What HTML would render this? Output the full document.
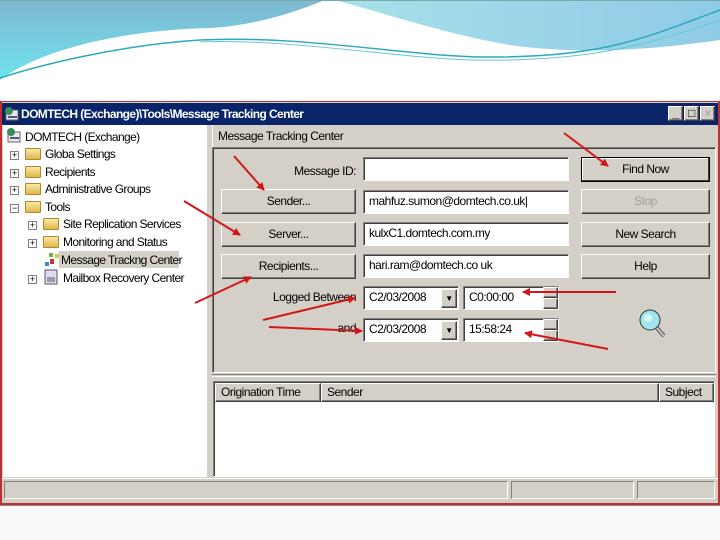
<!DOCTYPE html>
<html><head><meta charset="utf-8"><style>
*{box-sizing:border-box;margin:0;padding:0}
body{width:720px;height:540px;overflow:hidden;background:#fff;font-family:"Liberation Sans",sans-serif;font-size:12px;color:#000;position:relative;letter-spacing:-0.5px}
.a{position:absolute}
.btn{position:absolute;background:#d4d0c8;border:1px solid;border-color:#fff #404040 #404040 #fff;box-shadow:inset -1px -1px 0 #808080;text-align:center;line-height:22px;font-size:12px}
.inp{position:absolute;background:#fff;border:1px solid;border-color:#808080 #fff #fff #808080;box-shadow:inset 1px 1px 0 #404040;line-height:21px;padding-left:5px;font-size:12px;white-space:nowrap}
.lbl{position:absolute;font-size:12px;white-space:nowrap}
.tree{position:absolute;font-size:12px;white-space:nowrap;line-height:16px;letter-spacing:-0.6px}
.fold{display:inline-block;width:16px;height:12px;background:linear-gradient(#f7e9a8,#e0b84a);border:1px solid #b08a2a;border-radius:1px;vertical-align:-2px;margin-right:4px}
.pm{display:inline-block;width:9px;height:9px;border:1px solid #808080;background:#fff;font-size:9px;line-height:7px;text-align:center;vertical-align:0px;margin-right:6px;color:#000;letter-spacing:0}
</style></head><body>
<svg class="a" style="left:0;top:0" width="720" height="100">
<defs><linearGradient id="g1" x1="0" y1="0" x2="0" y2="1"><stop offset="0" stop-color="#7fb7cf"/><stop offset="1" stop-color="#6fe3ee"/></linearGradient>
<linearGradient id="g2" x1="0" y1="0" x2="1" y2="0"><stop offset="0" stop-color="#a9e0ea"/><stop offset="1" stop-color="#8fcbe6"/></linearGradient></defs>
<path d="M0 0 H325 C300 10 260 25 210 28 C120 30 40 50 0 80 Z" fill="url(#g1)"/>
<path d="M335 0 H720 V40 C650 50 580 55 510 45 C450 35 390 15 335 0Z" fill="url(#g2)"/>
<path d="M720 10 C640 40 600 58 480 57 C400 55 300 35 200 40 C120 45 40 65 0 78" stroke="#2aa9c0" stroke-width="1.5" fill="none"/>
<path d="M720 20 C640 48 580 62 470 60 C400 58 280 38 200 42" stroke="#68c7d6" stroke-width="1" fill="none"/>
<rect x="0" y="0" width="720" height="1" fill="#7aa"/>
</svg>
<div class="a" style="left:0;top:101px;width:720px;height:404px;background:#d4d0c8;border:2px solid #c03030;border-top:1px solid #c03030"></div>
<div class="a" style="left:2px;top:103px;width:716px;height:22px;background:#0a246a"></div>
<svg class="a" style="left:4px;top:106px" width="16" height="16"><rect x="2" y="4" width="12" height="10" fill="#e8e8f0" stroke="#666"/><circle cx="5" cy="5" r="4" fill="#3a8a5a"/><rect x="4" y="10" width="9" height="2" fill="#557"/></svg>
<div class="lbl" style="left:21px;top:107px;color:#fff;font-weight:bold;font-size:12px;letter-spacing:-0.6px">DOMTECH (Exchange)\Tools\Message Tracking Center</div>
<div class="btn" style="left:668px;top:106px;width:15px;height:15px;line-height:12px;font-weight:bold">_</div>
<div class="btn" style="left:684px;top:106px;width:15px;height:15px;line-height:13px">&#9633;</div>
<div class="btn" style="left:700px;top:106px;width:15px;height:15px;line-height:13px;color:#999">×</div>
<div class="a" style="left:3px;top:125px;width:206px;height:352px;background:#fff;border-right:2px solid #d4d0c8"></div>
<svg class="a" style="left:6px;top:127px" width="16" height="16"><rect x="2" y="5" width="12" height="10" fill="#e8e8f0" stroke="#666"/><circle cx="5" cy="5" r="4" fill="#3a8a5a"/><rect x="4" y="10" width="9" height="2" fill="#557"/></svg>
<div class="tree" style="left:25px;top:129px">DOMTECH (Exchange)</div>
<div class="tree" style="left:10px;top:146px"><span class="pm">+</span><span class="fold"></span>Globa Settings</div>
<div class="tree" style="left:10px;top:164px"><span class="pm">+</span><span class="fold"></span>Recipients</div>
<div class="tree" style="left:10px;top:181px"><span class="pm">+</span><span class="fold"></span>Administrative Groups</div>
<div class="tree" style="left:10px;top:199px"><span class="pm">−</span><span class="fold"></span>Tools</div>
<div class="tree" style="left:28px;top:216px"><span class="pm">+</span><span class="fold"></span>Site Replication Services</div>
<div class="tree" style="left:28px;top:234px"><span class="pm">+</span><span class="fold"></span>Monitoring and Status</div>
<div class="a" style="left:44px;top:252px;width:16px;height:16px"><svg width="16" height="16"><rect x="1" y="10" width="4" height="4" fill="#48c"/><rect x="5" y="1" width="4" height="4" fill="#6b4"/><rect x="11" y="2" width="4" height="4" fill="#dc4"/><rect x="6" y="7" width="4" height="5" fill="#c33"/></svg></div>
<div class="a" style="left:59px;top:251px;width:120px;height:17px;background:#d4d0c8"></div>
<div class="tree" style="left:61px;top:252px">Message Trackng Center</div>
<div class="tree" style="left:28px;top:269px"><span class="pm">+</span><svg width="16" height="16" style="vertical-align:-3px;margin-right:4px"><rect x="2" y="1" width="12" height="14" fill="#dde" stroke="#557"/><rect x="4" y="8" width="8" height="5" fill="#99a"/></svg>Mailbox Recovery Center</div>
<div class="a" style="left:212px;top:125px;width:504px;height:22px;background:#d4d0c8;border-left:1px solid #fff"></div>
<div class="lbl" style="left:218px;top:129px">Message Tracking Center</div>
<div class="a" style="left:212px;top:147px;width:504px;height:226px;border:1px solid;border-color:#808080 #fff #fff #808080;box-shadow:inset 1px 1px 0 #404040"></div>
<div class="lbl" style="right:364px;top:164px">Message ID:</div>
<div class="inp" style="left:363px;top:157px;width:206px;height:24px"></div>
<div class="btn" style="left:221px;top:189px;width:135px;height:25px">Sender...</div>
<div class="inp" style="left:363px;top:190px;width:206px;height:24px">mahfuz.sumon@domtech.co.uk|</div>
<div class="btn" style="left:221px;top:222px;width:135px;height:25px">Server...</div>
<div class="inp" style="left:363px;top:222px;width:206px;height:24px">kulxC1.domtech.com.my</div>
<div class="btn" style="left:221px;top:254px;width:135px;height:25px">Recipients...</div>
<div class="inp" style="left:363px;top:254px;width:206px;height:24px">hari.ram@domtech.co uk</div>
<div class="btn" style="left:581px;top:157px;width:129px;height:25px;border:1px solid #000;box-shadow:inset -1px -1px 0 #404040,inset 1px 1px 0 #fff">Find Now</div>
<div class="btn" style="left:581px;top:189px;width:129px;height:25px;color:#a0a0a0">Stop</div>
<div class="btn" style="left:581px;top:222px;width:129px;height:25px">New Search</div>
<div class="btn" style="left:581px;top:254px;width:129px;height:25px">Help</div>
<div class="lbl" style="right:364px;top:290px">Logged Between</div>
<div class="lbl" style="right:364px;top:321px">and</div>
<div class="inp" style="left:363px;top:286px;width:96px;height:24px">C2/03/2008</div>
<div class="btn" style="left:441px;top:289px;width:16px;height:19px;line-height:17px;font-size:8px">▼</div>
<div class="inp" style="left:463px;top:286px;width:96px;height:24px">C0:00:00</div>
<div class="inp" style="left:363px;top:318px;width:96px;height:24px">C2/03/2008</div>
<div class="btn" style="left:441px;top:321px;width:16px;height:19px;line-height:17px;font-size:8px">▼</div>
<div class="inp" style="left:463px;top:318px;width:96px;height:24px">15:58:24</div>
<div class="btn" style="left:543px;top:287px;width:15px;height:11px"></div><div class="btn" style="left:543px;top:298px;width:15px;height:11px"></div>
<div class="btn" style="left:543px;top:319px;width:15px;height:11px"></div><div class="btn" style="left:543px;top:330px;width:15px;height:11px"></div>
<svg class="a" style="left:638px;top:308px" width="32" height="32"><line x1="18" y1="19" x2="26" y2="28" stroke="#555" stroke-width="4"/><line x1="18" y1="19" x2="26" y2="28" stroke="#ccc" stroke-width="2"/><circle cx="12" cy="12" r="10" fill="#9ee6ec" stroke="#333"/><circle cx="10" cy="10" r="4" fill="#d8f8fa"/></svg>
<div class="a" style="left:212px;top:374px;width:504px;height:3px;border-top:1px solid #808080;border-bottom:1px solid #fff"></div>
<div class="a" style="left:213px;top:381px;width:502px;height:96px;background:#fff;border:1px solid;border-color:#808080 #fff #fff #808080;box-shadow:inset 1px 1px 0 #404040"></div>
<div class="btn" style="left:215px;top:383px;width:106px;height:19px;line-height:17px;text-align:left;padding-left:5px">Origination Time</div>
<div class="btn" style="left:321px;top:383px;width:338px;height:19px;line-height:17px;text-align:left;padding-left:5px">Sender</div>
<div class="btn" style="left:659px;top:383px;width:55px;height:19px;line-height:17px;text-align:left;padding-left:5px">Subject</div>
<div class="a" style="left:2px;top:478px;width:716px;height:23px;background:#d4d0c8;border-top:1px solid #fff"></div>
<div class="a" style="left:4px;top:481px;width:504px;height:18px;border:1px solid;border-color:#808080 #fff #fff #808080"></div>
<div class="a" style="left:511px;top:481px;width:123px;height:18px;border:1px solid;border-color:#808080 #fff #fff #808080"></div>
<div class="a" style="left:637px;top:481px;width:78px;height:18px;border:1px solid;border-color:#808080 #fff #fff #808080"></div>
<div class="a" style="left:0;top:505px;width:720px;height:35px;background:#fafafa;border-top:1px solid #888"></div>
<svg class="a" style="left:0;top:0" width="720" height="540">
<defs><marker id="m" markerWidth="8" markerHeight="8" refX="7" refY="4" orient="auto" markerUnits="userSpaceOnUse"><path d="M0 0L8 4L0 8Z" fill="#d01818"/></marker></defs>
<g stroke="#d01818" stroke-width="2" fill="none" marker-end="url(#m)">
<line x1="234" y1="156" x2="264" y2="190"/>
<line x1="184" y1="201" x2="240" y2="235"/>
<line x1="195" y1="303" x2="251" y2="277"/>
<line x1="263" y1="320" x2="355" y2="298"/>
<line x1="269" y1="327" x2="362" y2="331"/>
<line x1="564" y1="133" x2="608" y2="166"/>
<line x1="616" y1="292" x2="523" y2="292"/>
<line x1="608" y1="349" x2="525" y2="333"/>
</g></svg>
</body></html>
